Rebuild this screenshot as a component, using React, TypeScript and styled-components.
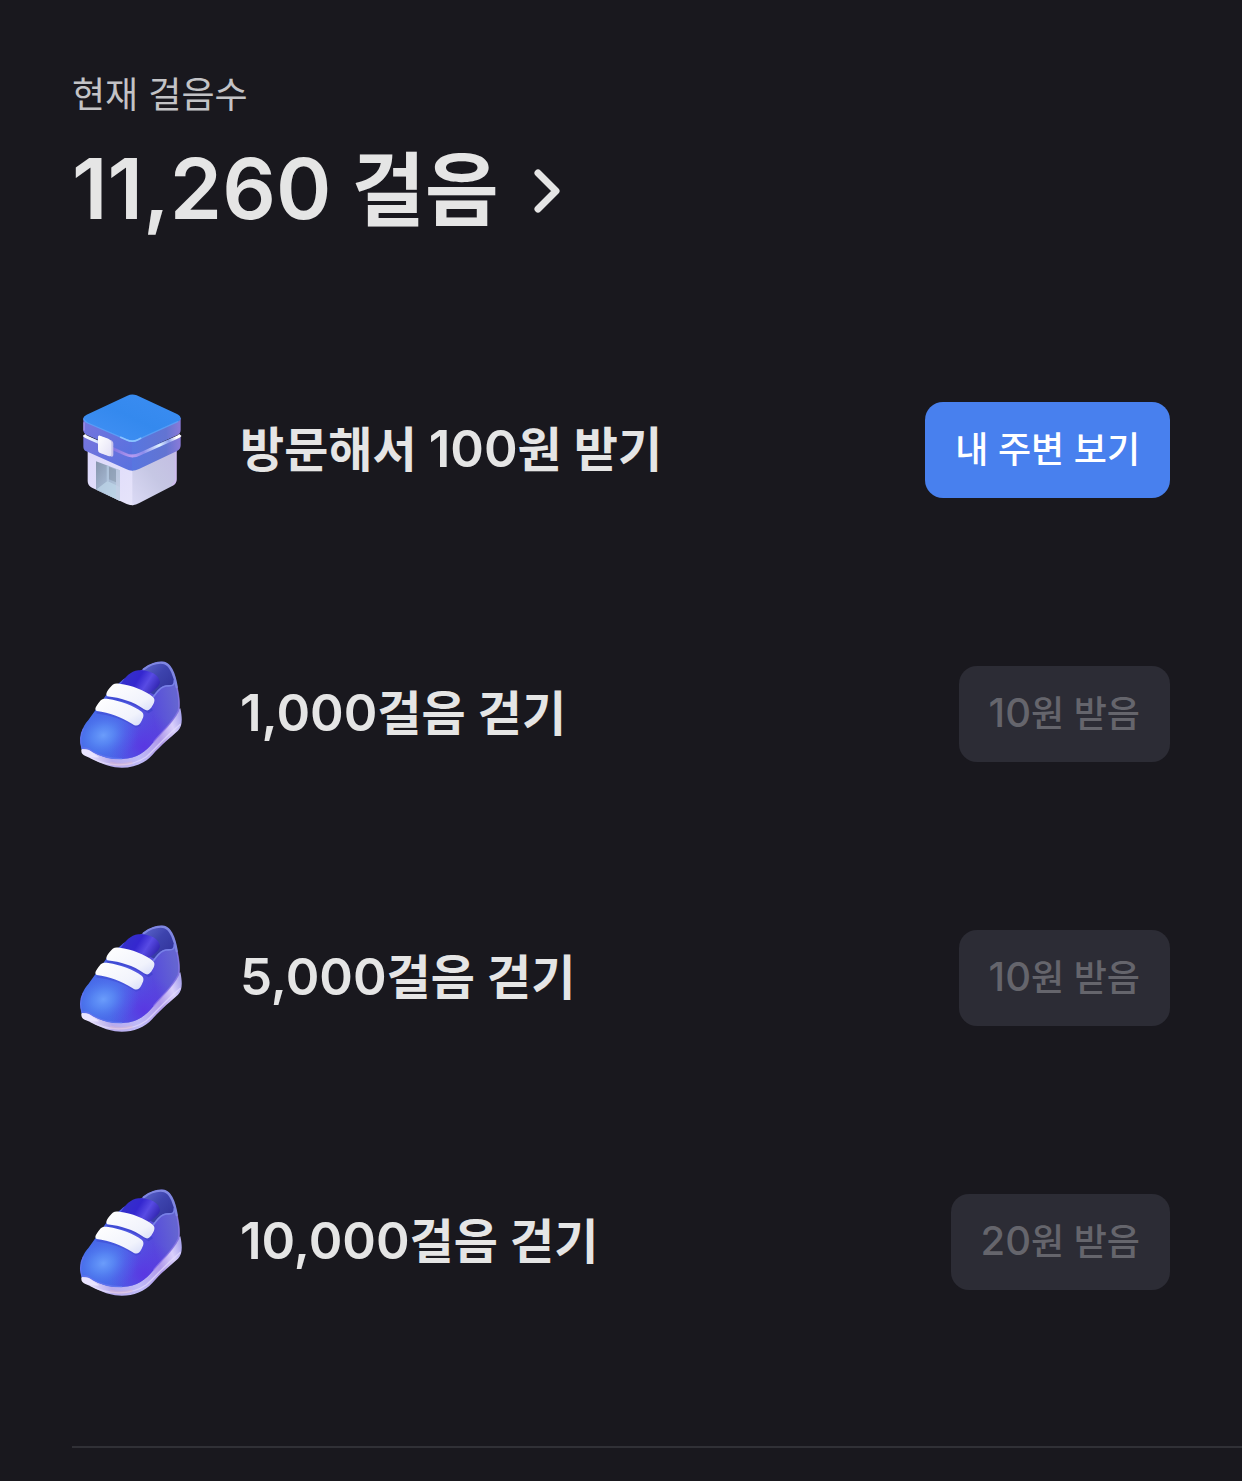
import React, { useId } from "react";
import styled, { createGlobalStyle } from "styled-components";

const GlobalStyle = createGlobalStyle`
  *, *::before, *::after { box-sizing: border-box; }
  body {
    margin: 0;
    background: #19181e;
    color: #e5e5e5;
    font-family: Inter, "Noto Sans CJK KR", sans-serif;
  }
`;

const Page = styled.main`
  padding: 72px 0 34px 72px;
`;

const Header = styled.header`
  display: flex;
  flex-direction: column;
  align-items: flex-start;
`;

const Caption = styled.p`
  margin: 0;
  font-size: 36px;
  line-height: 46px;
  color: #c3c3c6;
`;

const StepsLink = styled.a`
  display: flex;
  align-items: center;
  gap: 34px;
  margin-top: 20px;
  color: inherit;
  text-decoration: none;
`;

const Steps = styled.h1`
  margin: 0;
  font-size: 80px;
  line-height: 104px;
  font-weight: 600;
`;

const Num = styled.span<{ $size: number }>`
  font-size: ${(p) => p.$size}px;
  line-height: 1;
`;

const Chevron = styled.svg`
  width: 28px;
  height: 48px;
`;

const Missions = styled.ul`
  display: flex;
  flex-direction: column;
  gap: 144px;
  margin: 148px 72px 0 0;
  padding: 0;
  list-style: none;
`;

const Mission = styled.li`
  display: flex;
  align-items: center;
  gap: 48px;
`;

const Art = styled.svg`
  flex: none;
  width: 120px;
  height: 120px;
`;

const Name = styled.span`
  flex: 1;
  font-size: 48px;
  line-height: 72px;
  font-weight: 600;
`;

const Action = styled.button`
  height: 96px;
  padding: 0 30px;
  border: 0;
  border-radius: 18px;
  background: #4880ee;
  color: #fff;
  font-family: inherit;
  font-size: 36px;
  line-height: 48px;
  font-weight: 500;
  white-space: nowrap;
  cursor: pointer;

  &:disabled {
    background: #2c2c35;
    color: #65656c;
    cursor: default;
  }
`;

const Divider = styled.hr`
  height: 2px;
  margin: 144px 0 0;
  border: 0;
  background: #303036;
`;

/* Latin digits are set a little larger than the Hangul around them. */
function Mixed({ text, size }: { text: string; size: number }) {
  return (
    <>
      {text.split(/([\d,]+)/).map((part, i) =>
        /\d/.test(part) ? <Num key={i} $size={size}>{part}</Num> : part
      )}
    </>
  );
}

function StoreArt() {
  const id = useId();
  const u = (n: string) => `url(#${id}${n})`;
  return (
    <Art viewBox="6 15 360 360" aria-hidden="true">
      <defs>
        <linearGradient id={id + "top"} x1="0" y1="1" x2="1" y2="0">
          <stop offset="0" stopColor="#4391f5" />
          <stop offset=".5" stopColor="#3489ee" />
          <stop offset="1" stopColor="#3c8df2" />
        </linearGradient>
        <linearGradient id={id + "left"} x1="0" y1="0" x2="1" y2="1">
          <stop offset="0" stopColor="#7775dd" />
          <stop offset="1" stopColor="#5871df" />
        </linearGradient>
        <linearGradient id={id + "right"} x1="0" y1="0" x2="1" y2="0">
          <stop offset="0" stopColor="#5876e0" />
          <stop offset=".7" stopColor="#6274d2" />
          <stop offset="1" stopColor="#8a7ad8" />
        </linearGradient>
        <linearGradient id={id + "wall"} x1="0" y1="0" x2="1" y2="1">
          <stop offset="0" stopColor="#ddd8fb" />
          <stop offset="1" stopColor="#e6e4fa" />
        </linearGradient>
        <linearGradient id={id + "side"} x1="0" y1="1" x2="1" y2="0">
          <stop offset="0" stopColor="#dbdaf5" />
          <stop offset=".5" stopColor="#c6c7e4" />
          <stop offset="1" stopColor="#c3bde2" />
        </linearGradient>
        <linearGradient id={id + "trimL"} gradientUnits="userSpaceOnUse" x1="42" y1="150" x2="187" y2="213">
          <stop offset="0" stopColor="#fff" />
          <stop offset=".25" stopColor="#dbe8ff" />
          <stop offset=".6" stopColor="#7f74e0" />
          <stop offset="1" stopColor="#b69bf0" />
        </linearGradient>
        <linearGradient id={id + "trimR"} gradientUnits="userSpaceOnUse" x1="187" y1="213" x2="332" y2="150">
          <stop offset="0" stopColor="#b59af0" />
          <stop offset=".22" stopColor="#8c8dec" />
          <stop offset=".55" stopColor="#dff2ff" />
          <stop offset=".75" stopColor="#8fa0ed" />
          <stop offset=".9" stopColor="#fff" />
        </linearGradient>
        <linearGradient id={id + "glass"} x1="0" y1="0" x2="1" y2="1">
          <stop offset="0" stopColor="#8795ad" />
          <stop offset=".5" stopColor="#a3b6d0" />
          <stop offset="1" stopColor="#c3d3e6" />
        </linearGradient>
        <linearGradient id={id + "tag"} x1="0" y1="0" x2="1" y2="1">
          <stop offset="0" stopColor="#fff" />
          <stop offset="1" stopColor="#e3e1f6" />
        </linearGradient>
      </defs>
      <path d="M53 190 L190 245 V361 Q180 361 170 357 L66 308 Q53 302 53 288Z" fill={u("wall")} />
      <path d="M187 245 L320 190 V283 Q320 296 308 302 L208 354 Q198 360 187 361Z" fill={u("side")} />
      <path d="M317 198 V284 Q317 294 307 300" fill="none" stroke="#d3b8f3" strokeWidth="5" opacity=".7" />
      <path d="M78 229 L150 256 V348 L78 314Z" fill={u("glass")} />
      <path d="M117 246 L138 254 V292 L117 283Z" fill="#7e8b9e" opacity=".45" />
      <path d="M110 242 H117 V290 L110 287Z" fill="#b4c8e0" opacity=".8" />
      <path d="M80 313 L112 288 L150 306 V348Z" fill="#bdd5e8" opacity=".75" />
      <path d="M138 252 L150 256 V348 L138 342Z" fill="#c7cfe6" opacity=".6" />
      <path d="M40 150 L187 205 V257 Q177 257 168 252 L49 199 Q40 195 40 185Z" fill={u("left")} />
      <path d="M186 205 L332 150 V181 Q332 193 321 198 L207 252 Q197 257 186 257Z" fill={u("right")} />
      <path d="M40 98 L187 160 V207 Q178 207 168 202 L49 149 Q40 145 40 135Z" fill={u("left")} />
      <path d="M186 160 L332 98 V135 Q332 146 321 151 L207 202 Q197 207 186 207Z" fill={u("right")} />
      <path d="M42 150 Q46 155 54 158 L164 207 Q176 213 187 213" fill="none" stroke={u("trimL")} strokeWidth="9" />
      <path d="M186 213 Q199 213 210 207 L319 158 Q327 155 331 150" fill="none" stroke={u("trimR")} strokeWidth="9" />
      <path d="M172 32 Q186 25 200 31 L321 87 Q332 92 332 101 Q332 105 323 110 L204 164 Q187 173 169 164 L51 113 Q40 108 40 100 Q40 94 50 89Z" fill={u("top")} />
      <path d="M42 104 Q45 110 53 114 L169 164 Q187 173 204 164 L323 110" fill="none" stroke="#5fa6fb" strokeWidth="4" strokeLinecap="round" opacity=".7" />
      <path d="M152 157 L169 164 Q187 173 204 164 L212 160" fill="none" stroke="#8cc4ff" strokeWidth="5" strokeLinecap="round" />
      <path d="M42 112 V137" fill="none" stroke="#b69cee" strokeWidth="3" />
      <path d="M90 153 L121 165 Q130 168 130 176 V210 Q130 217 121 214 L91 204 Q84 201 84 193 V158 Q84 151 90 153Z" fill="#c6c1ea" />
      <path d="M90 152 L115 161 Q124 165 124 173 V207 Q124 216 115 213 L91 204 Q84 201 84 193 V157 Q84 150 90 152Z" fill={u("tag")} />
    </Art>
  );
}

function ShoeArt() {
  const id = useId();
  const u = (n: string) => `url(#${id}${n})`;
  return (
    <Art viewBox="6 12 360 360" aria-hidden="true">
      <defs>
        <linearGradient id={id + "body"} gradientUnits="userSpaceOnUse" x1="60" y1="230" x2="320" y2="170">
          <stop offset="0" stopColor="#4468e6" />
          <stop offset=".4" stopColor="#4f60e6" />
          <stop offset=".72" stopColor="#564bdc" />
          <stop offset="1" stopColor="#6464d2" />
        </linearGradient>
        <radialGradient id={id + "glow"} gradientUnits="userSpaceOnUse" cx="100" cy="256" r="110" gradientTransform="rotate(-20 100 256) scale(1 .8) translate(0 64)">
          <stop offset="0" stopColor="#6b9dfb" />
          <stop offset=".3" stopColor="#5b8df6" stopOpacity=".8" />
          <stop offset=".65" stopColor="#4f78f0" stopOpacity=".35" />
          <stop offset="1" stopColor="#4b6cec" stopOpacity="0" />
        </radialGradient>
        <radialGradient id={id + "shade"} gradientUnits="userSpaceOnUse" cx="222" cy="290" r="105">
          <stop offset="0" stopColor="#5a34e2" stopOpacity=".9" />
          <stop offset="1" stopColor="#5a34e2" stopOpacity="0" />
        </radialGradient>
        <linearGradient id={id + "sole"} gradientUnits="userSpaceOnUse" x1="35" y1="310" x2="335" y2="210">
          <stop offset="0" stopColor="#f2edff" />
          <stop offset=".25" stopColor="#b7abed" />
          <stop offset=".5" stopColor="#c0bbf7" />
          <stop offset=".75" stopColor="#b09aea" />
          <stop offset=".9" stopColor="#d9cffb" />
          <stop offset="1" stopColor="#ada7ee" />
        </linearGradient>
        <linearGradient id={id + "inside"} x1="0" y1="0" x2="1" y2="1">
          <stop offset="0" stopColor="#6069d0" />
          <stop offset=".45" stopColor="#3d43ad" />
          <stop offset="1" stopColor="#2d3096" />
        </linearGradient>
        <linearGradient id={id + "tongue"} x1="0" y1=".3" x2="1" y2=".7">
          <stop offset="0" stopColor="#3431c9" />
          <stop offset=".4" stopColor="#3427cf" />
          <stop offset=".65" stopColor="#584be4" />
          <stop offset="1" stopColor="#2c20a9" />
        </linearGradient>
        <linearGradient id={id + "strap"} x1="0" y1="0" x2="1" y2="1">
          <stop offset="0" stopColor="#fff" />
          <stop offset=".7" stopColor="#f1f3fc" />
          <stop offset="1" stopColor="#d7dcf8" />
        </linearGradient>
      </defs>
      <path d="M35 297 C32 308 36 314 48 319 C72 329 99 346 135 352 C178 358 220 345 247 315 C271 287 305 259 324 242 C337 229 338 207 331 175 L295 190 L220 280 L100 280Z" fill={u("sole")} />
      <path d="M62 323 C110 350 180 354 228 321 C254 300 273 272 332 222" fill="none" stroke="#e6defd" strokeWidth="4" opacity=".65" />
      <path d="M120 339 Q151 348 187 338" fill="none" stroke="#e2b8ca" strokeWidth="9" opacity=".4" />
      <path d="M219 58 C238 42 263 32 283 36 C304 42 315 74 322 111 C329 145 331 165 327 183 C306 222 275 247 251 276 C226 305 202 326 157 327 C115 328 86 317 66 303 C53 294 45 300 35 297 C27 263 34 233 56 209 L110 133 L160 88Z" fill={u("body")} />
      <path d="M219 58 C238 42 263 32 283 36 C304 42 315 74 322 111 C329 145 331 165 327 183 C306 222 275 247 251 276 C226 305 202 326 157 327 C115 328 86 317 66 303 C53 294 45 300 35 297 C27 263 34 233 56 209 L110 133 L160 88Z" fill={u("shade")} />
      <path d="M219 58 C238 42 263 32 283 36 C304 42 315 74 322 111 C329 145 331 165 327 183 C306 222 275 247 251 276 C226 305 202 326 157 327 C115 328 86 317 66 303 C53 294 45 300 35 297 C27 263 34 233 56 209 L110 133 L160 88Z" fill={u("glow")} />
      <path d="M219 57 C238 42 263 33 283 37 C302 42 313 70 313 96 C311 112 302 105 292 106 C272 107 264 121 253 134 L223 120 L219 57Z" fill={u("inside")} />
      <path d="M221 58 C240 43 265 36 283 39 C303 44 315 82 320 111" fill="none" stroke="#7f86e2" strokeWidth="7" strokeLinecap="round" />
      <path d="M313 92 C314 112 300 106 288 108 C269 111 263 125 251 139" fill="none" stroke="#7881e7" strokeWidth="5" strokeLinecap="round" />
      <path d="M321 112 C328 145 330 165 325 183 C306 222 275 246 251 276" fill="none" stroke="#9b82ec" strokeWidth="5" opacity=".55" />
      <path d="M153 101 C166 81 181 64 205 61 C234 57 268 73 270 96 C270 109 247 126 230 135Z" fill={u("tongue")} />
      <path d="M41 235 C30 255 30 276 36 295 Q52 291 67 304 C90 317 119 327 157 326" fill="none" stroke="#5d73ee" strokeWidth="4" />
      <path d="M36 298 C52 295 66 306 88 322 C66 325 50 318 42 313 Q34 308 36 298Z" fill="#eae4ff" />
      <path d="M110 145 Q178 143 236 184 L246 177" fill="none" stroke="#363cc7" strokeWidth="10" opacity=".55" />
      <path d="M80 186 Q146 193 198 228 L211 223" fill="none" stroke="#3c43cf" strokeWidth="9" opacity=".45" />
      <path d="M112 139 C105 133 112 122 119 114 C129 102 132 99 148 101 C186 106 224 120 248 140 C257 147 253 157 248 166 C240 181 233 185 222 178 C189 154 152 144 112 139Z" fill={u("strap")} />
      <path d="M80 183 C72 179 78 170 85 160 C94 147 99 145 115 147 C151 153 191 167 215 185 C224 193 220 202 215 212 C207 227 200 231 187 222 C153 200 119 189 80 183Z" fill={u("strap")} />
    </Art>
  );
}

const missions = [
  { name: "방문해서 100원 받기", action: "내 주변 보기", done: false, art: StoreArt },
  { name: "1,000걸음 걷기", action: "10원 받음", done: true, art: ShoeArt },
  { name: "5,000걸음 걷기", action: "10원 받음", done: true, art: ShoeArt },
  { name: "10,000걸음 걷기", action: "20원 받음", done: true, art: ShoeArt },
];

export default function App() {
  return (
    <Page lang="ko">
      <GlobalStyle />
      <Header>
        <Caption>현재 걸음수</Caption>
        <StepsLink href="#steps">
          <Steps><Mixed text="11,260 걸음" size={84} /></Steps>
          <Chevron viewBox="0 0 28 48" aria-hidden="true">
            <path d="M5 7 L23 25 L5 43" fill="none" stroke="#e5e5e5" strokeWidth="7" strokeLinecap="round" strokeLinejoin="round" />
          </Chevron>
        </StepsLink>
      </Header>
      <Missions>
        {missions.map(({ name, action, done, art: Picture }) => (
          <Mission key={name}>
            <Picture />
            <Name><Mixed text={name} size={51} /></Name>
            <Action type="button" disabled={done}><Mixed text={action} size={40} /></Action>
          </Mission>
        ))}
      </Missions>
      <Divider />
    </Page>
  );
}
